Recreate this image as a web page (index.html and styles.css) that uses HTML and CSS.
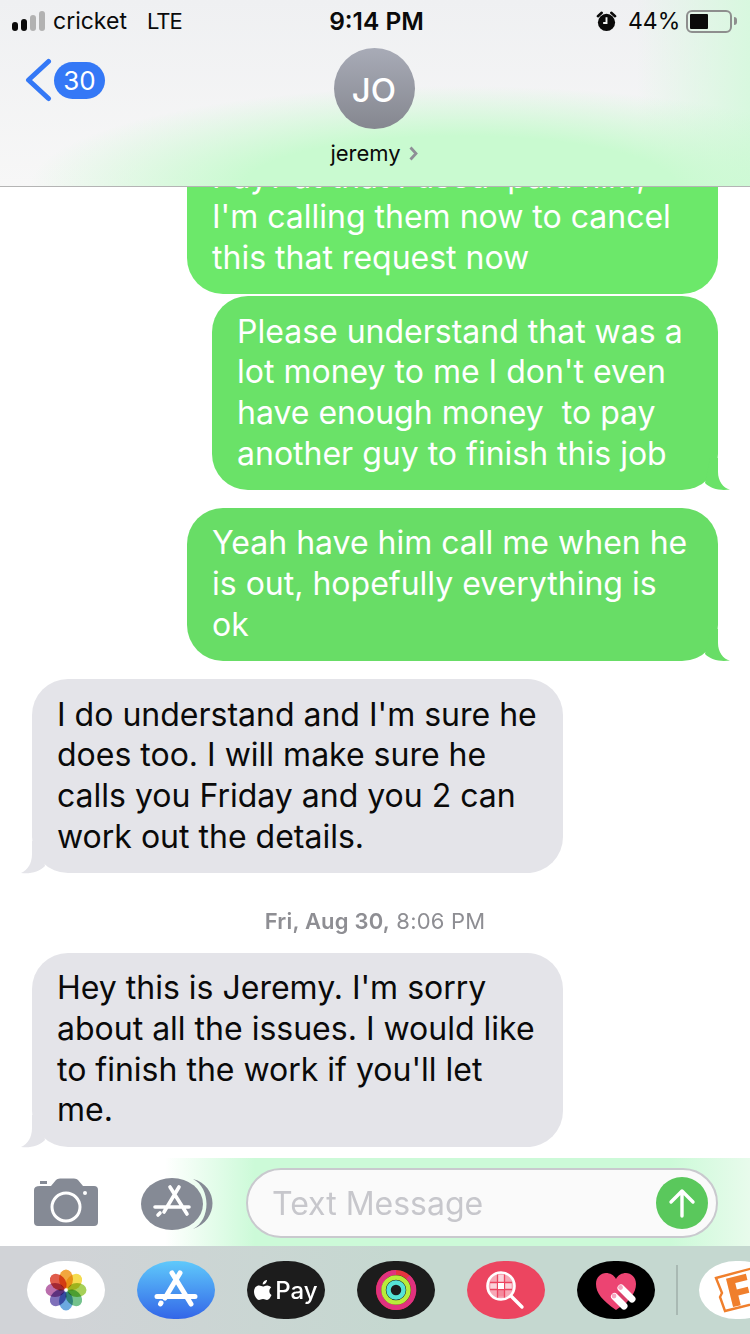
FILE: index.html
```html
<!DOCTYPE html>
<html lang="en">
<head>
	<meta charset="UTF-8">
	<title>jeremy</title>
	<link rel="stylesheet" href="styles.css">
</head>
<body>
<div class="header">
	<div class="status">
		<div class="status-left">
			<span class="signal"><i class="on s1"></i><i class="on s2"></i><i class="s3"></i><i class="s4"></i></span>
			<span class="carrier">cricket</span>
			<span class="network">LTE</span>
		</div>
		<div class="clock">9:14 PM</div>
		<div class="status-right">
			<svg class="alarm" width="21" height="21" viewBox="0 0 22 22">
				<circle cx="11" cy="12" r="9" fill="#0a0a0a"/>
				<path d="M2 5.500 L6 1.800 M20 5.500 L16 1.800" stroke="#0a0a0a" stroke-width="2.600" stroke-linecap="round"/>
				<path d="M11 6.500 V12.500 H7.500" fill="none" stroke="#f1f3f2" stroke-width="2"/>
			</svg>
			<span class="percent">44%</span>
			<span class="battery"><i class="level"></i></span>
			<i class="nub"></i>
		</div>
	</div>
	<div class="nav">
		<div class="back">
			<svg width="28" height="44" viewBox="0 0 28 44"><path d="M24.500 3.500 L4.500 22 L24.500 40.500" fill="none" stroke="#3478f6" stroke-width="5" stroke-linecap="round" stroke-linejoin="round"/></svg>
			<span class="count">30</span>
		</div>
		<div class="contact">
			<div class="avatar">JO</div>
			<div class="name">jeremy <svg width="9" height="15" viewBox="0 0 9 15"><path d="M1.500 1.500 L7 7.500 L1.500 13.500" fill="none" stroke="#8e8e96" stroke-width="2.800"/></svg></div>
		</div>
	</div>
</div>

<div class="thread">
	<div class="bubble sent wide first">Pay? at that I used&nbsp; paid him,<br>I'm calling them now to cancel<br>this that request now</div>
	<div class="bubble sent narrow">Please understand that was a<br>lot money to me I don't even<br>have enough money&nbsp; to pay<br>another guy to finish this job
		<svg class="tail tail-right" width="30" height="32" viewBox="0 0 30 32"><path d="M10 0 H18 V14 C18 23 23 30 30 31.500 C20 33 11 31 5 25 Z"/></svg>
	</div>
	<div class="bubble sent wide gap">Yeah have him call me when he<br>is out, hopefully everything is<br>ok
		<svg class="tail tail-right" width="30" height="32" viewBox="0 0 30 32"><path d="M10 0 H18 V14 C18 23 23 30 30 31.500 C20 33 11 31 5 25 Z"/></svg>
	</div>
	<div class="bubble got gap">I do understand and I'm sure he<br>does too. I will make sure he<br>calls you Friday and you 2 can<br>work out the details.
		<svg class="tail tail-left" width="30" height="32" viewBox="0 0 30 32"><path d="M20 0 H12 V13 C12 22 8 29 1 32 C11 33 19 31 25 25 Z"/></svg>
	</div>
	<div class="stamp"><b>Fri, Aug 30,</b> 8:06 PM</div>
	<div class="bubble got">Hey this is Jeremy. I'm sorry<br>about all the issues. I would like<br>to finish the work if you'll let<br>me.
		<svg class="tail tail-left" width="30" height="32" viewBox="0 0 30 32"><path d="M20 0 H12 V13 C12 22 8 29 1 32 C11 33 19 31 25 25 Z"/></svg>
	</div>
</div>

<div class="composer">
	<svg class="camera" width="64" height="48" viewBox="0 0 64 48">
		<path d="M6 8 H17 L22 2 Q23 0.500 26 0.500 H40 Q43 0.500 44 2 L49 8 H60 Q64 8 64 12 V44 Q64 48 60 48 H4 Q0 48 0 44 V12 Q0 8 6 8 Z" fill="#858a95"/>
		<rect x="6" y="3" width="7" height="3" fill="#858a95"/>
		<circle cx="32" cy="29" r="14" fill="none" stroke="#fff" stroke-width="3"/>
		<circle cx="51" cy="15" r="2" fill="#fff"/>
	</svg>
	<svg class="apps" width="72" height="54" viewBox="0 0 72 54">
		<path d="M52 3 C78 10 78 44 52 53 C70 44 70 12 52 3 Z" fill="#858a95"/>
		<ellipse cx="31" cy="28" rx="31" ry="26" fill="#858a95"/>
		<path d="M29 11 L46 38 M38 11 L23 36 M19 37 L17 39 M14 31 H48" fill="none" stroke="#fff" stroke-width="3.600" stroke-linecap="round"/>
	</svg>
	<div class="input">
		<span class="placeholder">Text Message</span>
		<span class="send">
			<svg width="30" height="32" viewBox="0 0 30 32"><path d="M15 29 V4 M4 15 L15 4 L26 15" fill="none" stroke="#fff" stroke-width="3.400" stroke-linecap="round" stroke-linejoin="round"/></svg>
		</span>
	</div>
</div>

<div class="dock">
	<div class="app white">
		<svg class="flower" width="44" height="44" viewBox="-22 -22 44 44">
			<ellipse cx="0" cy="-11" rx="7" ry="9.500" fill="#f2a63e"/>
			<ellipse cx="0" cy="-11" rx="7" ry="9.500" fill="#f5dc50" transform="rotate(45)"/>
			<ellipse cx="0" cy="-11" rx="7" ry="9.500" fill="#a6d058" transform="rotate(90)"/>
			<ellipse cx="0" cy="-11" rx="7" ry="9.500" fill="#74c28c" transform="rotate(135)"/>
			<ellipse cx="0" cy="-11" rx="7" ry="9.500" fill="#6ca9e0" transform="rotate(180)"/>
			<ellipse cx="0" cy="-11" rx="7" ry="9.500" fill="#7f70ba" transform="rotate(225)"/>
			<ellipse cx="0" cy="-11" rx="7" ry="9.500" fill="#ba6eac" transform="rotate(270)"/>
			<ellipse cx="0" cy="-11" rx="7" ry="9.500" fill="#e05c4c" transform="rotate(315)"/>
			<circle r="1.500" fill="#fff"/>
		</svg>
	</div>
	<div class="app store">
		<svg width="78" height="58" viewBox="0 0 78 58">
			<path d="M35 12 L54 43 M43 12 L28 37 M24 42 L23.500 43 M20 35.500 H58" fill="none" stroke="#fff" stroke-width="5" stroke-linecap="round"/>
		</svg>
	</div>
	<div class="app dark pay">
		<svg width="18" height="22" viewBox="0 0 18 22"><path d="M13 1 C13 3.500 11 5.500 8.700 5.500 C8.500 3.200 10.700 1 13 1 Z M17.500 16 C16.500 18.500 14.800 21 13 21 C11.500 21 11 20 9 20 C7 20 6.400 21 5 21 C2.800 21 0 16.500 0 12.800 C0 8.800 2.500 6.600 5 6.600 C6.600 6.600 8 7.600 9 7.600 C10 7.600 11.500 6.400 13.400 6.500 C14.500 6.600 16.200 7 17.200 8.600 C14.500 10.400 15 14.800 17.500 16 Z" fill="#fff"/></svg>
		<span>Pay</span>
	</div>
	<div class="app dark">
		<svg width="44" height="44" viewBox="0 0 44 44">
			<circle cx="22" cy="22" r="17.500" fill="none" stroke="#e8343f" stroke-width="5"/>
			<path d="M22 4.500 A17.500 17.500 0 1 0 34 9" fill="none" stroke="#e0317f" stroke-width="5"/>
			<circle cx="22" cy="22" r="12.500" fill="none" stroke="#b8ec3a" stroke-width="4.500"/>
			<circle cx="22" cy="22" r="7.500" fill="none" stroke="#55e3d6" stroke-width="4.500"/>
		</svg>
	</div>
	<div class="app red">
		<svg width="44" height="44" viewBox="0 0 44 44">
			<circle cx="17" cy="18" r="13.500" fill="#f7a8b6"/>
			<rect x="13.500" y="7" width="7" height="7" fill="#fbd3da"/>
			<rect x="20.500" y="14.500" width="7" height="7" fill="#fbd3da"/>
			<rect x="6.500" y="14.500" width="7" height="7" fill="#fbd3da"/>
			<rect x="13.500" y="21.500" width="7" height="7" fill="#f48a9c"/>
			<path d="M6 14.500 H28 M6 21.500 H28 M13.500 6 V30 M20.500 6 V30" stroke="#ec4560" stroke-width="1.300"/>
			<rect x="14" y="15" width="6" height="6" fill="#fff"/>
			<circle cx="17" cy="18" r="13.500" fill="none" stroke="#fff" stroke-width="2.600"/>
			<path d="M27 28 L38 39" stroke="#fff" stroke-width="3.400" stroke-linecap="round"/>
		</svg>
	</div>
	<div class="app black">
		<svg width="44" height="40" viewBox="0 0 44 40">
			<path d="M22 40 C8 30 2 23 2 14 C2 7 7 3 12 3 C16 3 20 5 22 9 C24 5 28 3 32 3 C37 3 42 7 42 14 C42 23 36 30 22 40 Z" fill="#ec4472"/>
			<path d="M20 29 L28 38 L38 26 L30 16 Z" fill="#d94069"/>
			<path d="M20.500 26.500 L30 36 M27 18 L38 29" stroke="#fff" stroke-width="7" stroke-linecap="round"/>
			<circle cx="20" cy="26" r="2.400" fill="#f6a6c0"/>
			<circle cx="26.500" cy="17.500" r="2.400" fill="#f6a6c0"/>
		</svg>
	</div>
	<i class="divider"></i>
	<div class="app white fandango">
		<svg width="60" height="58" viewBox="0 0 60 58">
			<path d="M17 17 L58 6 L62 41 L26 50 L21 36 L23 32 Z" fill="#fff" stroke="#f07f2c" stroke-width="2.400"/>
			<text class="fandango-f" x="28" y="44" transform="rotate(-14 40 28)">F</text>
		</svg>
	</div>
</div>
</body>
</html>
```
FILE: styles.css
```css
* {
	box-sizing: border-box;
}
body {
	margin: 0;
	width: 750px;
	height: 1334px;
	overflow: hidden;
	background: #fff;
	font-family: Inter, "Liberation Sans", sans-serif;
	display: flex;
	flex-direction: column;
	color: #0a0a0a;
}
i {
	display: block;
}

/* header */
.header {
	height: 187px;
	flex-shrink: 0;
	border-bottom: 1px solid #b4b4b4;
	background:
		radial-gradient(ellipse 430px 100px at 460px 186px, #c9fad0 0%, #c9fad0 50%, rgba(201, 250, 208, 0) 100%),
		linear-gradient(90deg, rgba(240, 241, 242, 0) 85%, #d8f8df 100%),
		linear-gradient(#eff0f2, #f7f7f7);
	position: relative;
	z-index: 1;
}
.status {
	height: 42px;
	display: grid;
	grid-template-columns: 1fr auto 1fr;
	align-items: center;
	font-size: 23px;
}
.status-left {
	display: flex;
	align-items: center;
	padding-left: 12px;
}
.signal {
	display: flex;
	align-items: flex-end;
	gap: 3px;
	width: 41px;
	flex-shrink: 0;
}
.signal i {
	flex-shrink: 0;
	width: 6px;
	background: #b2b2b2;
	border-radius: 3px;
}
.signal .on {
	background: #0a0a0a;
}
.s1 {
	height: 9px;
}
.s2 {
	height: 12px;
}
.s3 {
	height: 16px;
}
.s4 {
	height: 20px;
}
.carrier {
	width: 94px;
}
.network {
	font-size: 22px;
	letter-spacing: -1px;
}
.clock {
	font-weight: 600;
	font-size: 24.500px;
	margin-left: 3px;
}
.status-right {
	display: flex;
	align-items: center;
	justify-content: flex-end;
	padding-right: 13px;
}
.alarm {
	margin-right: 11px;
}
.percent {
	width: 58px;
}
.battery {
	width: 46px;
	height: 23px;
	border: 2px solid #8e8e8e;
	border-radius: 6px;
	padding: 2px;
}
.level {
	width: 18px;
	height: 15px;
	background: #0a0a0a;
	border-radius: 1px;
}
.nub {
	width: 3px;
	height: 8px;
	margin-left: 2px;
	background: #8e8e8e;
	border-radius: 0 3px 3px 0;
}
.nav {
	position: relative;
	display: flex;
	justify-content: center;
	padding: 6px 2px 0 0;
}
.back {
	position: absolute;
	left: 24px;
	top: 16px;
	display: flex;
	align-items: center;
	gap: 2px;
}
.count {
	width: 51px;
	height: 37px;
	border-radius: 19px;
	background: #3478f6;
	color: #fff;
	font-size: 26px;
	line-height: 37px;
	text-align: center;
}
.contact {
	display: flex;
	flex-direction: column;
	align-items: center;
}
.avatar {
	width: 81px;
	height: 81px;
	border-radius: 50%;
	background: linear-gradient(#a8abb7, #85878f);
	color: #fff;
	font-size: 33px;
	font-weight: 500;
	line-height: 85px;
	text-align: center;
}
.name {
	margin-top: 10px;
	font-size: 22px;
	line-height: 28px;
	display: flex;
	align-items: center;
	gap: 8px;
}

/* messages */
.thread {
	flex: 1;
	min-height: 0;
	overflow: hidden;
	display: flex;
	flex-direction: column;
}
.bubble {
	position: relative;
	flex-shrink: 0;
	width: 531px;
	padding: 15.500px 0 15.500px 25px;
	border-radius: 36px;
	font-size: 32px;
	line-height: 40.700px;
}
.sent {
	align-self: flex-end;
	margin-right: 32px;
	background: #68dd66;
	color: #fff;
	fill: #68dd66;
}
.got {
	margin-left: 32px;
	background: #e4e4e9;
	color: #0a0a0a;
	fill: #e4e4e9;
}
.first {
	margin-top: -46.500px;
	padding-top: 16px;
	background: #6ce86a;
}
.narrow {
	width: 506px;
	margin-top: 2px;
	background: #6ae268;
	fill: #6ae268;
}
.gap {
	margin-top: 18px;
}
.tail {
	position: absolute;
	bottom: 0;
	overflow: visible;
}
.tail-right {
	right: -12px;
}
.tail-left {
	left: -12px;
}
.stamp {
	flex-shrink: 0;
	margin: 35px 0 19px;
	text-align: center;
	font-size: 22px;
	letter-spacing: 0.200px;
	line-height: 26px;
	color: #8e8e93;
}
.stamp b {
	font-weight: 600;
}

/* input bar */
.composer {
	height: 88px;
	flex-shrink: 0;
	display: flex;
	align-items: flex-start;
	padding: 10px 32px 0 34px;
	background: linear-gradient(90deg, #fff 165px, #ccfad8 255px, #ccfad8 670px, #e8fbec 750px);
}
.camera {
	margin-top: 10px;
	flex-shrink: 0;
}
.apps {
	margin: 8px 0 0 43px;
	flex-shrink: 0;
}
.input {
	margin-left: 33px;
	width: 472px;
	height: 70px;
	border: 2px solid #c9c9ce;
	border-radius: 35px;
	background: #fafafa;
	display: flex;
	align-items: center;
	justify-content: space-between;
	padding: 0 8px 0 24px;
}
.placeholder {
	font-size: 32px;
	color: #c7c7cc;
}
.send {
	width: 52px;
	height: 52px;
	border-radius: 50%;
	background: #5ac85c;
	display: flex;
	align-items: center;
	justify-content: center;
}

/* app strip */
.dock {
	height: 88px;
	flex-shrink: 0;
	display: flex;
	align-items: center;
	gap: 32px;
	padding: 0 0 0 27px;
	overflow: hidden;
	background: linear-gradient(90deg, #d1d3d7 60px, #c5d8d0 400px);
}
.app {
	width: 78px;
	height: 58px;
	flex-shrink: 0;
	border-radius: 37px / 29px;
	display: flex;
	align-items: center;
	justify-content: center;
}
.white {
	background: #fff;
}
.store {
	background: linear-gradient(#5fc9fb, #3366e8);
}
.dark {
	background: #1c1c1c;
}
.black {
	background: #000;
}
.red {
	background: #ec4560;
}
.pay {
	gap: 3px;
	color: #fff;
	font-size: 24px;
	font-weight: 500;
}
.flower ellipse {
	mix-blend-mode: multiply;
}
.divider {
	width: 2px;
	height: 50px;
	margin: 0 -11px;
	background: #a9b9b3;
	flex-shrink: 0;
}
.fandango {
	justify-content: flex-start;
}
.fandango svg {
	flex-shrink: 0;
	overflow: visible;
}
.fandango-f {
	font-size: 40px;
	font-weight: 900;
	fill: #f07f2c;
}
```
